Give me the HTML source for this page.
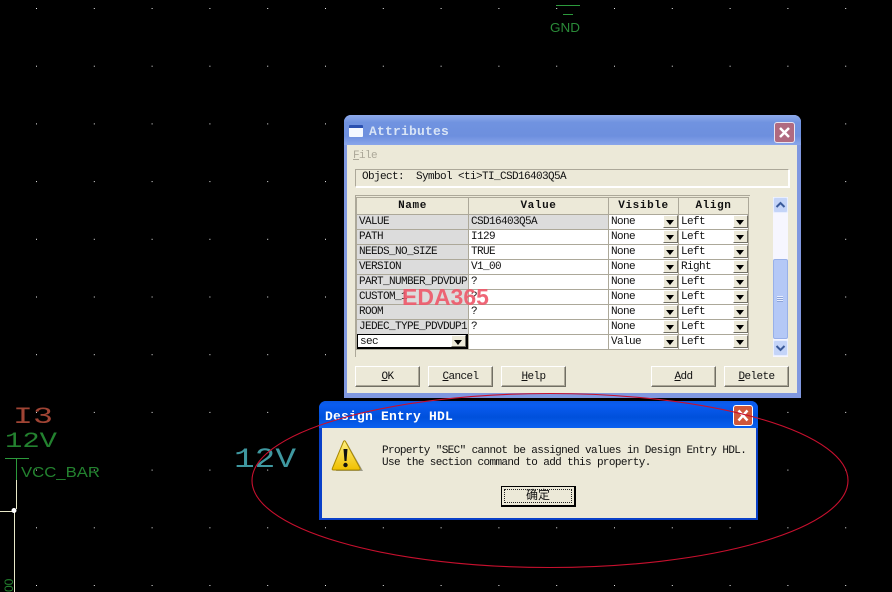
<!DOCTYPE html>
<html><head><meta charset="utf-8"><style>
html,body{margin:0;padding:0;background:#000;width:892px;height:592px;overflow:hidden}
body{position:relative;font:11px/13px "Liberation Mono","Noto Sans CJK SC",monospace;letter-spacing:-.6px;color:#111}
div,span,table,td,th{box-sizing:border-box}
.a{position:absolute;white-space:pre}
.win{position:absolute;border-radius:7px 7px 0 0}
.client{position:absolute;background:#ece9d8}
.btn{position:absolute;top:366px;height:21px;background:#ece9d8;border:1px solid;border-color:#fff #716f64 #716f64 #fff;box-shadow:inset -1px -1px 0 #aca899;text-align:center;line-height:20px}
table{position:absolute;left:356px;top:197px;width:392px;border-collapse:collapse;table-layout:fixed;background:#fff}
th{height:17px;background:#ece9d8;border:1px solid #aca899;font-weight:bold;letter-spacing:.6px;padding:0;line-height:15px;text-align:center}
td{height:15px;border:1px solid #aca899;padding:0 0 0 2px;position:relative;line-height:13px;white-space:nowrap;overflow:hidden}
td.n{background:#dcdcdc}
.ar{position:absolute;right:0;top:0;width:15px;height:13px;background:#ece9d8;border:1px solid;border-color:#fff #716f64 #716f64 #fff}
.ar:after{content:"";position:absolute;left:2px;top:4px;border:4.500px solid transparent;border-top:5px solid #000;border-bottom:0}
</style></head><body>

<svg class="a" style="left:0;top:0" width="892" height="592">
<defs><pattern id="g" x="36" y="8" width="57.8" height="57.7" patternUnits="userSpaceOnUse"><rect x="0" y="0" width="1" height="1" fill="#eee" shape-rendering="crispEdges"/></pattern></defs>
<rect width="892" height="592" fill="url(#g)"/>
<g stroke="#2c9a3c" stroke-width="1" fill="none" shape-rendering="crispEdges">
<path d="M556 5.500H580M563 14.500H573"/>
<path d="M5 458.500H29M16.500 458V480"/>
</g>
<path d="M16.500 480V509M14.500 510V592M0 511.500H14" stroke="#e8e8c8" stroke-width="1" fill="none" shape-rendering="crispEdges"/>
<circle cx="14" cy="510.500" r="2.500" fill="#fff"/>
<g font-family="Liberation Sans, sans-serif" letter-spacing="0">
<text x="550" y="32" font-size="13" fill="#2a8a38" textLength="30" lengthAdjust="spacingAndGlyphs">GND</text>
<text x="13" y="423" font-size="23" fill="#a04434" font-family="Liberation Mono, monospace" textLength="40" lengthAdjust="spacingAndGlyphs">I3</text>
<text x="5" y="447" font-size="22" fill="#23822f" font-family="Liberation Mono, monospace" textLength="52" lengthAdjust="spacingAndGlyphs">12V</text>
<text x="21" y="477" font-size="15" fill="#23822f" textLength="79" lengthAdjust="spacingAndGlyphs">VCC_BAR</text>
<text x="234" y="467" font-size="28" fill="#3f98a0" font-family="Liberation Mono, monospace" textLength="62" lengthAdjust="spacingAndGlyphs">12V</text>
<text transform="translate(13,592) rotate(-90)" x="0" y="0" font-size="12" fill="#23822f">00</text>
</g>
</svg>

<!-- Attributes window -->
<div class="win" style="left:344px;top:115px;width:457px;height:283px;background:#8098e0"></div>
<div class="win" style="left:344px;top:115px;width:457px;height:30px;background:linear-gradient(#8ea9ea,#7093e0 25%,#6d8fde 70%,#8aa6ea)"></div>
<div class="a" style="left:349px;top:125px;width:14px;height:12px;background:#f4f8ff;border-top:3px solid #2a50b0;border-radius:1px"></div>
<div class="a" style="left:369px;top:125px;font-size:13px;font-weight:bold;letter-spacing:.2px;color:#d8e4f6">Attributes</div>
<div class="a" style="left:774px;top:122px;width:21px;height:21px;background:#b06a80;border:1px solid #e8e4f0;border-radius:3px"></div>
<svg class="a" style="left:774px;top:122px" width="21" height="21"><path d="M6 6L15 15M15 6L6 15" stroke="#fff" stroke-width="2.500"/></svg>
<div class="client" style="left:347px;top:145px;width:450px;height:248px"></div>
<div class="a" style="left:353px;top:150px;color:#aca899"><u>F</u>ile</div>
<div class="a" style="left:355px;top:169px;width:434px;height:18px;border:1px solid;border-color:#aca899 #fff #fff #aca899;box-shadow:1px 1px 0 #fff"></div>
<div class="a" style="left:362px;top:171px">Object:  Symbol &lt;ti&gt;TI_CSD16403Q5A</div>
<div class="a" style="left:355px;top:195px;width:1px;height:162px;background:#aca899"></div>
<div class="a" style="left:355px;top:195px;width:395px;height:1px;background:#aca899"></div>

<table>
<colgroup><col style="width:112px"><col style="width:140px"><col style="width:70px"><col style="width:70px"></colgroup>
<tr><th>Name</th><th>Value</th><th>Visible</th><th>Align</th></tr>
<tr><td class="n">VALUE</td><td class="n">CSD16403Q5A</td><td>None<span class="ar"></span></td><td>Left<span class="ar"></span></td></tr>
<tr><td class="n">PATH</td><td>I129</td><td>None<span class="ar"></span></td><td>Left<span class="ar"></span></td></tr>
<tr><td class="n">NEEDS_NO_SIZE</td><td>TRUE</td><td>None<span class="ar"></span></td><td>Left<span class="ar"></span></td></tr>
<tr><td class="n">VERSION</td><td>V1_00</td><td>None<span class="ar"></span></td><td>Right<span class="ar"></span></td></tr>
<tr><td class="n">PART_NUMBER_PDVDUP</td><td>?</td><td>None<span class="ar"></span></td><td>Left<span class="ar"></span></td></tr>
<tr><td class="n">CUSTOM_1</td><td>?</td><td>None<span class="ar"></span></td><td>Left<span class="ar"></span></td></tr>
<tr><td class="n">ROOM</td><td>?</td><td>None<span class="ar"></span></td><td>Left<span class="ar"></span></td></tr>
<tr><td class="n">JEDEC_TYPE_PDVDUP1</td><td>?</td><td>None<span class="ar"></span></td><td>Left<span class="ar"></span></td></tr>
<tr><td style="background:#ece9d8"></td><td></td><td>Value<span class="ar"></span></td><td>Left<span class="ar"></span></td></tr>
</table>
<div class="a" style="left:357px;top:334px;width:111px;height:15px;background:#fff;border:1px solid #000;padding-left:2px;line-height:14px;border-right-width:2px;border-bottom-width:2px">sec<span class="ar" style="right:0;top:0;height:12px"></span></div>

<!-- scrollbar -->
<div class="a" style="left:773px;top:197px;width:15px;height:160px;background:#f6f6ff"></div>
<div class="a" style="left:773px;top:197px;width:15px;height:16px;background:#c4d4f8;border:1px solid #e8eeff;border-radius:2px"></div>
<svg class="a" style="left:773px;top:197px" width="15" height="16"><path d="M3.500 10L7.500 6L11.500 10" stroke="#3a5a9a" stroke-width="2" fill="none"/></svg>
<div class="a" style="left:773px;top:259px;width:15px;height:80px;background:#b4c8f6;border:1px solid #98b0e8;border-radius:2px"></div>
<div class="a" style="left:777px;top:296px;width:6px;height:6px;background:repeating-linear-gradient(#e8eeff 0 1px,#8ca4d8 1px 2px)"></div>
<div class="a" style="left:773px;top:340px;width:15px;height:16px;background:#c4d4f8;border:1px solid #e8eeff;border-radius:2px"></div>
<svg class="a" style="left:773px;top:340px" width="15" height="16"><path d="M3.500 6L7.500 10L11.500 6" stroke="#3a5a9a" stroke-width="2" fill="none"/></svg>

<div class="btn" style="left:355px;width:65px"><u>O</u>K</div>
<div class="btn" style="left:428px;width:65px"><u>C</u>ancel</div>
<div class="btn" style="left:501px;width:65px"><u>H</u>elp</div>
<div class="btn" style="left:651px;width:65px"><u>A</u>dd</div>
<div class="btn" style="left:724px;width:65px"><u>D</u>elete</div>

<div class="a" style="left:402px;top:284px;font:bold 23px/26px 'Liberation Sans',sans-serif;letter-spacing:0;color:#ee5a6c;opacity:.92">EDA365</div>

<!-- Error dialog -->
<div class="win" style="left:319px;top:401px;width:439px;height:119px;background:#0a40c8"></div>
<div class="win" style="left:319px;top:401px;width:439px;height:27px;background:linear-gradient(#0a58e4,#0a5cf0 15%,#0050dc 60%,#0a60f0)"></div>
<div class="a" style="left:325px;top:410px;font-size:13px;font-weight:bold;letter-spacing:.2px;color:#fff">Design Entry HDL</div>
<div class="a" style="left:733px;top:405px;width:20px;height:21px;background:#d0583a;border:1px solid #fff;border-radius:3px"></div>
<svg class="a" style="left:733px;top:405px" width="20" height="21"><path d="M5.500 5.500L14.500 15.500M14.500 5.500L5.500 15.500" stroke="#fff" stroke-width="2.500"/></svg>
<div class="client" style="left:322px;top:428px;width:434px;height:90px"></div>
<svg class="a" style="left:331px;top:440px" width="33" height="33">
<defs><linearGradient id="y" x1="0" y1="0" x2="0" y2="1"><stop offset="0" stop-color="#fff080"/><stop offset="1" stop-color="#f0c000"/></linearGradient></defs>
<path d="M16 3L32 31H5z" fill="#8a8878" opacity=".8"/>
<path d="M14.500 1.500L29 28Q29.500 30 27.500 30H2.500Q.500 30 1.500 28L12.500 1.500Q13.500 0 14.500 1.500z" fill="url(#y)" stroke="#a88800"/>
<path d="M12.500 9H16.500L15.500 21H13.500z" fill="#111"/><circle cx="14.500" cy="25" r="2.200" fill="#111"/>
</svg>
<div class="a" style="left:382px;top:445px;line-height:12px;letter-spacing:-.63px">Property "SEC" cannot be assigned values in Design Entry HDL.
Use the section command to add this property.</div>
<div class="a" style="left:501px;top:486px;width:75px;height:21px;background:#ece9d8;border:1px solid #000;border-right-width:2px;border-bottom-width:2px;text-align:center;line-height:18px;font-size:12px;letter-spacing:0">确定<span class="a" style="left:2px;top:2px;width:68px;height:14px;border:1px dotted #222"></span></div>

<svg class="a" style="left:0;top:0" width="892" height="592"><ellipse cx="550" cy="480.500" rx="298" ry="87" fill="none" stroke="#c8102e" stroke-width="1.100"/></svg>
</body></html>
